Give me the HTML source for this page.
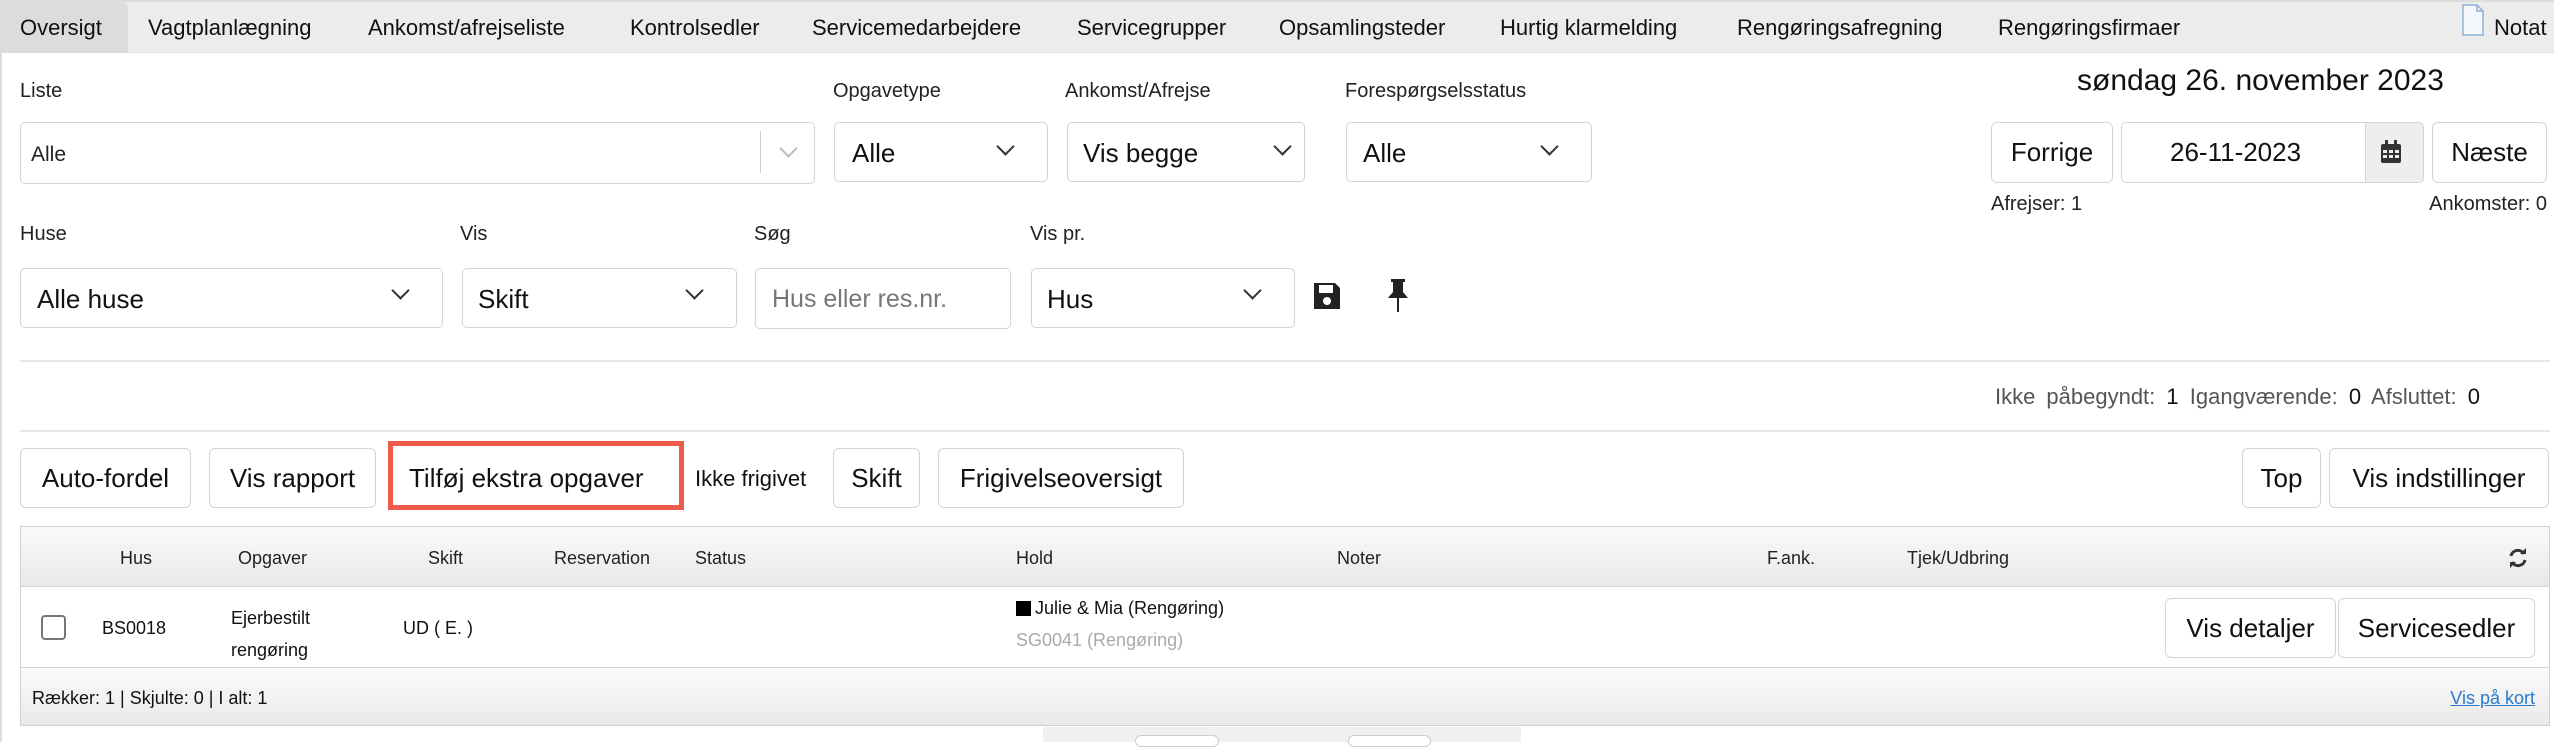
<!DOCTYPE html>
<html><head><meta charset="utf-8"><style>
*{box-sizing:border-box;margin:0;padding:0}
body{width:2554px;height:742px;overflow:hidden;background:#fff;font-family:"Liberation Sans",Arial,sans-serif;color:#222;position:relative}
.a{position:absolute;white-space:nowrap}
.tabs{position:absolute;left:0;top:0;width:2554px;height:53px;background:#ececec;border-top:2px solid #ddd;border-bottom:1px solid #e2e2e2}
.tab{position:absolute;top:13px;font-size:22px;color:#111}
.lbl{font-size:20px;color:#222}
.box{position:absolute;border:1.5px solid #d4d4d4;border-radius:5px;background:#fff}
.sel{font-size:26px;color:#111}
.chev{position:absolute;width:13px;height:13px;border-right:2.5px solid #333;border-bottom:2.5px solid #333;transform:rotate(45deg)}
.btn{position:absolute;border:1.5px solid #d4d4d4;border-radius:6px;background:#fff;font-size:26px;color:#111;display:flex;align-items:center;justify-content:center}
.th{position:absolute;top:548px;font-size:18px;color:#222}
.td{position:absolute;font-size:18px;color:#111}
</style></head><body>
<div style="position:absolute;left:0;top:0;width:2px;height:742px;background:#ddd"></div>
<div class="tabs">
<div style="position:absolute;left:0;top:0;width:128px;height:51px;background:#dcdcdc;border-radius:0 6px 0 0"></div>
<div class="tab" style="left:20px">Oversigt</div>
<div class="tab" style="left:148px">Vagtplanlægning</div>
<div class="tab" style="left:368px">Ankomst/afrejseliste</div>
<div class="tab" style="left:630px">Kontrolsedler</div>
<div class="tab" style="left:812px">Servicemedarbejdere</div>
<div class="tab" style="left:1077px">Servicegrupper</div>
<div class="tab" style="left:1279px">Opsamlingsteder</div>
<div class="tab" style="left:1500px">Hurtig klarmelding</div>
<div class="tab" style="left:1737px">Rengøringsafregning</div>
<div class="tab" style="left:1998px">Rengøringsfirmaer</div>
<svg class="a" style="left:2461px;top:2px" width="24" height="32" viewBox="0 0 24 32"><path d="M2 1h14l6 6v24H2z" fill="#f4f8fd" stroke="#8fb0d8" stroke-width="1.5"/><path d="M16 1v6h6" fill="none" stroke="#8fb0d8" stroke-width="1.5"/></svg>
<div class="tab" style="left:2494px">Notat</div>
</div>

<div class="a lbl" style="left:20px;top:80px">Liste</div>
<div class="a lbl" style="left:833px;top:80px">Opgavetype</div>
<div class="a lbl" style="left:1065px;top:80px">Ankomst/Afrejse</div>
<div class="a lbl" style="left:1345px;top:80px">Forespørgselsstatus</div>

<div class="box" style="left:20px;top:122px;width:795px;height:62px"></div>
<div class="a" style="left:31px;top:143px;font-size:21px;color:#222">Alle</div>
<div class="a" style="left:760px;top:131px;width:1px;height:42px;background:#ccc"></div>
<div class="chev" style="left:782px;top:142px;border-color:#bbb;border-width:2px"></div>
<div class="box" style="left:834px;top:122px;width:214px;height:60px"></div>
<div class="a sel" style="left:852px;top:138px">Alle</div><div class="chev" style="left:999px;top:140px"></div>
<div class="box" style="left:1067px;top:122px;width:238px;height:60px"></div>
<div class="a sel" style="left:1083px;top:138px">Vis begge</div><div class="chev" style="left:1276px;top:140px"></div>
<div class="box" style="left:1346px;top:122px;width:246px;height:60px"></div>
<div class="a sel" style="left:1363px;top:138px">Alle</div><div class="chev" style="left:1543px;top:140px"></div>

<div class="a" style="left:2077px;top:64px;font-size:30px;color:#111">søndag 26. november 2023</div>
<div class="btn" style="left:1991px;top:122px;width:122px;height:61px">Forrige</div>
<div class="box" style="left:2121px;top:122px;width:303px;height:61px;overflow:hidden"><div style="position:absolute;right:0;top:0;width:58px;height:100%;background:#eceeef;border-left:1.5px solid #d4d4d4"></div></div>
<div class="a sel" style="left:2170px;top:137px">26-11-2023</div>
<svg class="a" style="left:2380px;top:140px" width="22" height="24" viewBox="0 0 22 24"><rect x="1" y="4" width="20" height="19" rx="2" fill="#333"/><rect x="5" y="0" width="3" height="6" fill="#333"/><rect x="14" y="0" width="3" height="6" fill="#333"/><g fill="#eceeef"><rect x="3" y="10" width="4" height="3"/><rect x="9" y="10" width="4" height="3"/><rect x="15" y="10" width="4" height="3"/><rect x="3" y="15" width="4" height="3"/><rect x="9" y="15" width="4" height="3"/><rect x="15" y="15" width="4" height="3"/></g></svg>
<div class="btn" style="left:2432px;top:122px;width:115px;height:61px">Næste</div>
<div class="a lbl" style="left:1991px;top:193px">Afrejser: 1</div>
<div class="a lbl" style="right:7px;top:193px">Ankomster: 0</div>

<div class="a lbl" style="left:20px;top:223px">Huse</div>
<div class="a lbl" style="left:460px;top:223px">Vis</div>
<div class="a lbl" style="left:754px;top:223px">Søg</div>
<div class="a lbl" style="left:1030px;top:223px">Vis pr.</div>

<div class="box" style="left:20px;top:268px;width:423px;height:60px"></div>
<div class="a sel" style="left:37px;top:284px">Alle huse</div><div class="chev" style="left:394px;top:284px"></div>
<div class="box" style="left:462px;top:268px;width:275px;height:60px"></div>
<div class="a sel" style="left:478px;top:284px">Skift</div><div class="chev" style="left:688px;top:284px"></div>
<div class="box" style="left:755px;top:268px;width:256px;height:61px"></div>
<div class="a" style="left:772px;top:285px;font-size:25px;color:#777">Hus eller res.nr.</div>
<div class="box" style="left:1031px;top:268px;width:264px;height:60px"></div>
<div class="a sel" style="left:1047px;top:284px">Hus</div><div class="chev" style="left:1246px;top:284px"></div>
<svg class="a" style="left:1312px;top:281px" width="30" height="30" viewBox="0 0 30 30"><path d="M2 2h21l5 5v21H2z" fill="#222"/><rect x="7" y="4" width="14" height="8" fill="#fff"/><circle cx="15" cy="20" r="4" fill="#fff"/></svg>
<svg class="a" style="left:1385px;top:278px" width="26" height="36" viewBox="0 0 26 36"><path d="M6 1h14v3h-2v10l5 6H3l5-6V4H6z" fill="#222"/><rect x="12" y="20" width="2" height="14" fill="#222"/></svg>

<div class="a" style="left:20px;top:360px;width:2530px;height:2px;background:#e6e6e6"></div>
<div class="a" style="right:74px;top:384px;font-size:22px;color:#555;word-spacing:5px">Ikke påbegyndt: <span style="color:#111">1</span> Igangværende: <span style="color:#111">0</span> Afsluttet: <span style="color:#111">0</span></div>
<div class="a" style="left:20px;top:430px;width:2530px;height:2px;background:#e6e6e6"></div>

<div class="btn" style="left:20px;top:448px;width:171px;height:60px">Auto-fordel</div>
<div class="btn" style="left:209px;top:448px;width:167px;height:60px">Vis rapport</div>
<div class="a" style="left:388px;top:441px;width:296px;height:69px;border:5px solid #f05a4a;background:#fff"></div>
<div class="a" style="left:409px;top:463px;font-size:26px;color:#111">Tilføj ekstra opgaver</div>
<div class="a" style="left:695px;top:466px;font-size:22px;color:#111">Ikke frigivet</div>
<div class="btn" style="left:833px;top:448px;width:87px;height:60px">Skift</div>
<div class="btn" style="left:938px;top:448px;width:246px;height:60px">Frigivelseoversigt</div>
<div class="btn" style="left:2242px;top:448px;width:79px;height:60px">Top</div>
<div class="btn" style="left:2329px;top:448px;width:220px;height:60px">Vis indstillinger</div>

<div class="a" style="left:20px;top:526px;width:2530px;height:200px;border:1.5px solid #d0d0d0"></div>
<div class="a" style="left:21px;top:527px;width:2528px;height:60px;background:linear-gradient(#fafafa,#e8e8e8);border-bottom:1.5px solid #d6d6d6"></div>
<div class="th" style="left:120px">Hus</div>
<div class="th" style="left:238px">Opgaver</div>
<div class="th" style="left:428px">Skift</div>
<div class="th" style="left:554px">Reservation</div>
<div class="th" style="left:695px">Status</div>
<div class="th" style="left:1016px">Hold</div>
<div class="th" style="left:1337px">Noter</div>
<div class="th" style="left:1767px">F.ank.</div>
<div class="th" style="left:1907px">Tjek/Udbring</div>
<svg class="a" style="left:2508px;top:547px" width="20" height="22" viewBox="0 0 20 22"><path d="M16 7A7 7 0 0 0 3 9M4 15a7 7 0 0 0 13-2" fill="none" stroke="#333" stroke-width="3"/><path d="M12 7h6V1zM8 15H2v6z" fill="#333"/></svg>

<div class="a" style="left:41px;top:615px;width:25px;height:25px;border:2px solid #777;border-radius:4px"></div>
<div class="td" style="left:102px;top:618px">BS0018</div>
<div class="td" style="left:231px;top:602px;line-height:32px">Ejerbestilt<br>rengøring</div>
<div class="td" style="left:403px;top:618px">UD ( E. )</div>
<div class="a" style="left:1016px;top:601px;width:15px;height:15px;background:#000"></div>
<div class="td" style="left:1035px;top:598px">Julie &amp; Mia (Rengøring)</div>
<div class="td" style="left:1016px;top:630px;color:#aaa">SG0041 (Rengøring)</div>
<div class="btn" style="left:2165px;top:598px;width:171px;height:60px">Vis detaljer</div>
<div class="btn" style="left:2338px;top:598px;width:197px;height:60px">Servicesedler</div>

<div class="a" style="left:21px;top:667px;width:2528px;height:58px;background:linear-gradient(#fbfbfb,#e9e9e9);border-top:1.5px solid #d6d6d6"></div>
<div class="a" style="left:32px;top:688px;font-size:18px;color:#111">Rækker: 1 | Skjulte: 0 | I alt: 1</div>
<div class="a" style="right:19px;top:688px;font-size:18px;color:#2a7ad0;text-decoration:underline">Vis på kort</div>

<div class="a" style="left:1043px;top:727px;width:478px;height:15px;background:#f0f0f0"></div>
<div class="a" style="left:1135px;top:735px;width:84px;height:12px;border:1.5px solid #ccc;border-radius:6px;background:#fff"></div>
<div class="a" style="left:1348px;top:735px;width:83px;height:12px;border:1.5px solid #ccc;border-radius:6px;background:#fff"></div>
</body></html>
